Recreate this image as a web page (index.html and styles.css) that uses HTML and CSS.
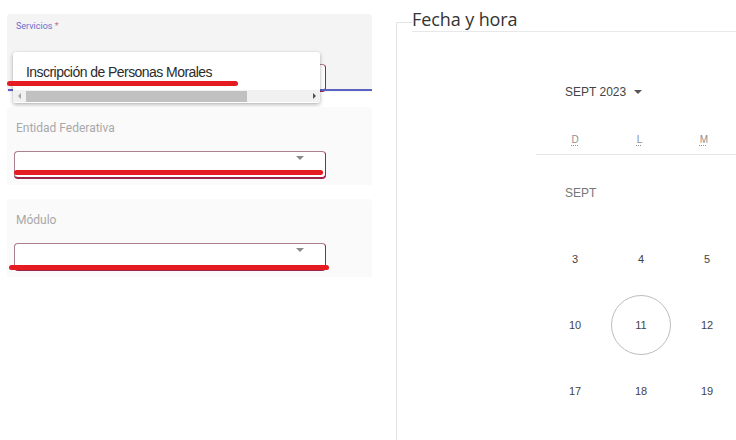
FILE: index.html
```html
<!DOCTYPE html>
<html lang="es">
<head>
<meta charset="utf-8">
<link rel="stylesheet" href="styles.css">
</head>
<body>
<div class="page">
  <div class="left">
    <div class="card card-focus">
      <div class="label label-float">Servicios <span class="req">*</span></div>
      <div class="select"><span class="arrow"></span></div>
      <div class="focus-line"></div>
      <div class="menu">
        <div class="menu-item">Inscripción de Personas Morales</div>
        <div class="hscroll">
          <span class="sarrow sarrow-l"></span>
          <span class="thumb"></span>
          <span class="sarrow sarrow-r"></span>
        </div>
      </div>
      <div class="mark mark-1"></div>
    </div>
    <div class="card">
      <div class="label">Entidad Federativa</div>
      <div class="select"><span class="arrow"></span></div>
      <div class="mark mark-2"></div>
    </div>
    <div class="card">
      <div class="label">Módulo</div>
      <div class="select"><span class="arrow"></span></div>
      <div class="mark mark-3"></div>
    </div>
  </div>
  <div class="right">
    <div class="legend-row">
      <div class="tick"></div>
      <div class="legend">Fecha y hora</div>
    </div>
    <div class="panel">
      <div class="calendar">
        <div class="cal-header">SEPT 2023 <span class="cal-arrow"></span></div>
        <div class="cal-days">
          <abbr class="cal-dn">D</abbr><abbr class="cal-dn">L</abbr><abbr class="cal-dn">M</abbr>
        </div>
        <div class="cal-body">
          <div class="cal-row">
            <div class="cal-label">SEPT</div>
          </div>
          <div class="cal-row">
            <div class="cell">3</div><div class="cell">4</div><div class="cell">5</div>
          </div>
          <div class="cal-row">
            <div class="cell">10</div><div class="cell"><span class="today">11</span></div><div class="cell">12</div>
          </div>
          <div class="cal-row">
            <div class="cell">17</div><div class="cell">18</div><div class="cell">19</div>
          </div>
        </div>
      </div>
    </div>
  </div>
</div>
</body>
</html>
```
FILE: styles.css
```css
html, body {
  margin: 0;
  padding: 0;
  background: #fff;
  overflow: hidden;
}
body {
  font-family: Roboto, "Liberation Sans", Arial, sans-serif;
  color: #333;
}
.page {
  display: flex;
  width: 736px;
  height: 440px;
  overflow: hidden;
}
.left {
  width: 365px;
  padding: 14px 0 0 7px;
  display: flex;
  flex-direction: column;
  gap: 15px;
  flex: none;
}
.card {
  position: relative;
  height: 78px;
  background: #fafafa;
  border-radius: 3px 3px 0 0;
}
.card + .card + .card { margin-top: -1px; }
.card-focus {
  background: #f4f4f4;
}
.label {
  padding: 14px 0 0 9px;
  height: 16px;
  font-size: 12px;
  line-height: 14px;
  color: #a8a8a8;
}
.label-float {
  padding-top: 7px;
  height: 23px;
  font-size: 9px;
  line-height: 11px;
  color: #6d6dcc;
}
.req { color: #c9717f; }
.select {
  position: relative;
  margin: 14px 0 0 7px;
  width: 310px;
  height: 25px;
  background: #fff;
  border: 1px solid #a98092;
  border-bottom-color: #9d2449;
  border-right-color: #9d2449;
  border-radius: 4px;
  box-shadow: 0 1px 0 #9d2449;
}
.card-focus .select { margin-top: 20px; }
.arrow {
  position: absolute;
  right: 21px;
  top: 4px;
  width: 0;
  height: 0;
  border-left: 4px solid transparent;
  border-right: 4px solid transparent;
  border-top: 4px solid #8a8a8a;
}
.focus-line {
  position: absolute;
  left: 1px;
  right: 0;
  bottom: 1px;
  height: 2px;
  background: #5b63c2;
}
.menu {
  position: absolute;
  left: 6px;
  top: 38px;
  width: 307px;
  height: 51px;
  background: #fff;
  box-shadow: 0 2px 4px rgba(0,0,0,0.25), 0 0 2px rgba(0,0,0,0.12);
  border-radius: 2px;
  display: flex;
  flex-direction: column;
}
.menu-item {
  flex: 1;
  padding: 11px 0 0 13px;
  font-family: "Liberation Sans", Arial, sans-serif;
  font-size: 14px;
  line-height: 18px;
  letter-spacing: -0.55px;
  color: #2b2b2b;
  white-space: nowrap;
}
.hscroll {
  display: flex;
  align-items: center;
  height: 12px;
  background: #f1f1f1;
  margin-bottom: 1px;
}
.sarrow {
  width: 0;
  height: 0;
  border-top: 3px solid transparent;
  border-bottom: 3px solid transparent;
}
.sarrow-l {
  margin: 0 5px 0 5px;
  border-right: 3px solid #a3a3a3;
}
.sarrow-r {
  margin: 0 4px 0 auto;
  border-left: 3px solid #505050;
}
.thumb {
  width: 221px;
  height: 11px;
  background: #c1c1c1;
}
.mark {
  position: absolute;
  height: 5px;
  border-radius: 3px;
  background: #e41c22;
}
.mark-1 { left: 0; width: 231px; top: 67px; }
.mark-2 { left: 7px; width: 309px; top: 63px; height: 5px; }
.mark-3 { left: 2px; width: 320px; top: 66px; }

.right {
  margin-left: 24px;
  flex: 1;
  display: flex;
  flex-direction: column;
  min-width: 0;
}
.legend-row {
  display: flex;
  height: 32px;
  flex: none;
}
.tick {
  width: 15px;
  margin-top: 22px;
  border-top: 1px solid #e4e4e4;
  border-left: 1px solid #e4e4e4;
}
.legend {
  flex: 1;
  border-bottom: 1px solid #e8e8e8;
  padding: 9px 0 0 0;
  font-family: "Open Sans", "Noto Sans", sans-serif;
  font-size: 18px;
  line-height: 21px;
  letter-spacing: -0.1px;
  color: #333;
  white-space: nowrap;
}
.panel {
  flex: 1;
  border-left: 1px solid #e4e4e4;
  overflow: hidden;
  position: relative;
}
.calendar {
  margin-left: 139px;
  font-family: "Liberation Sans", Arial, sans-serif;
}
.cal-header {
  margin-top: 50px;
  padding-left: 29px;
  height: 20px;
  line-height: 20px;
  font-size: 12px;
  color: #444;
  display: flex;
  align-items: center;
}
.cal-arrow {
  margin-left: 8px;
  width: 0;
  height: 0;
  border-left: 4px solid transparent;
  border-right: 4px solid transparent;
  border-top: 4px solid #555;
}
.cal-days {
  margin-top: 23px;
  padding-left: 7px;
  height: 29px;
  display: flex;
  align-items: center;
  border-bottom: 1px solid #e6e6e6;
}
.cal-dn {
  width: 66px;
  text-align: center;
  font-size: 10px;
  color: #8f8f8f;
  text-decoration: underline dotted;
  text-underline-offset: 2px;
}
.cal-body {
  padding: 5px 0 0 6px;
}
.cal-row {
  display: flex;
  height: 66px;
}
.cal-label {
  padding-left: 23px;
  line-height: 66px;
  font-size: 12px;
  color: #777;
}
.cell {
  width: 66px;
  height: 66px;
  flex: none;
  display: flex;
  align-items: center;
  justify-content: center;
  font-size: 11px;
  color: #444;
}
.today {
  width: 58px;
  height: 58px;
  border: 1px solid #bdbdbd;
  border-radius: 50%;
  display: flex;
  align-items: center;
  justify-content: center;
}
```
